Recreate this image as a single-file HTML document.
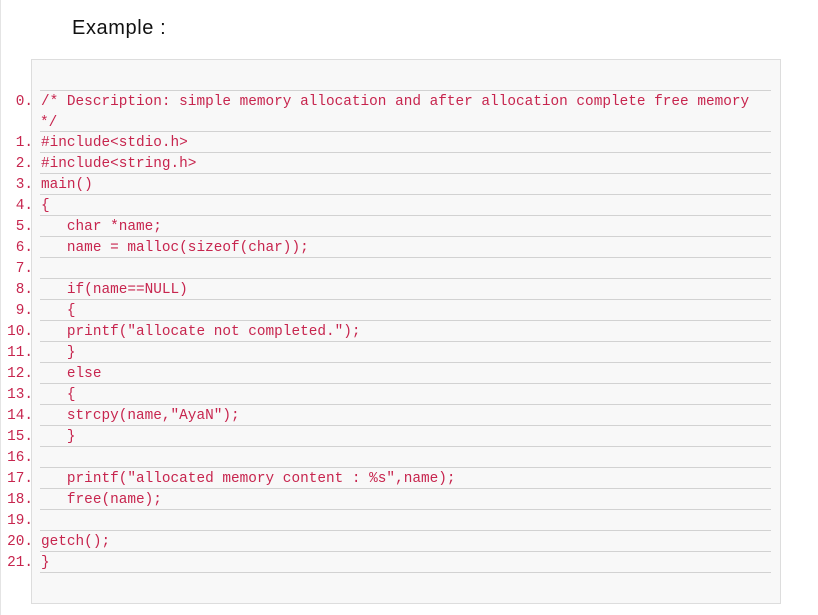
<!DOCTYPE html>
<html><head><style>
body{margin:0;width:818px;height:615px;background:#fff;position:relative;overflow:hidden;font-family:"Liberation Sans",sans-serif}
.vl{position:absolute;left:0;top:0;width:1px;height:615px;background:#e4e4e4}
h3{position:absolute;left:72px;top:17px;margin:0;font-weight:normal;font-size:20px;letter-spacing:0.6px;color:#111}
.box{position:absolute;left:31px;top:59px;width:748px;height:543px;background:#f8f8f8;border:1px solid #ddd}
.r{position:absolute;left:40px;width:731px;border-top:1px solid #d2d2d2;font-family:"Liberation Mono",monospace;font-size:14.4px;line-height:21px;color:#c7254e;white-space:pre}
.r span{position:absolute;right:738px;top:1px;color:#c7254e}
.r b{font-weight:normal;padding-left:1px;position:relative;top:1px}
</style></head><body>
<div class="vl"></div>
<h3>Example :</h3>
<div class="box"></div>
<div class="r" style="top:90px;height:40px"><span>0.</span><b>/* Description: simple memory allocation and after allocation complete free memory
*/</b></div>
<div class="r" style="top:131px"><span>1.</span><b>#include&lt;stdio.h&gt;</b></div>
<div class="r" style="top:152px"><span>2.</span><b>#include&lt;string.h&gt;</b></div>
<div class="r" style="top:173px"><span>3.</span><b>main()</b></div>
<div class="r" style="top:194px"><span>4.</span><b>{</b></div>
<div class="r" style="top:215px"><span>5.</span><b>   char *name;</b></div>
<div class="r" style="top:236px"><span>6.</span><b>   name = malloc(sizeof(char));</b></div>
<div class="r" style="top:257px"><span>7.</span><b> </b></div>
<div class="r" style="top:278px"><span>8.</span><b>   if(name==NULL)</b></div>
<div class="r" style="top:299px"><span>9.</span><b>   {</b></div>
<div class="r" style="top:320px"><span>10.</span><b>   printf("allocate not completed.");</b></div>
<div class="r" style="top:341px"><span>11.</span><b>   }</b></div>
<div class="r" style="top:362px"><span>12.</span><b>   else</b></div>
<div class="r" style="top:383px"><span>13.</span><b>   {</b></div>
<div class="r" style="top:404px"><span>14.</span><b>   strcpy(name,"AyaN");</b></div>
<div class="r" style="top:425px"><span>15.</span><b>   }</b></div>
<div class="r" style="top:446px"><span>16.</span><b> </b></div>
<div class="r" style="top:467px"><span>17.</span><b>   printf("allocated memory content : %s",name);</b></div>
<div class="r" style="top:488px"><span>18.</span><b>   free(name);</b></div>
<div class="r" style="top:509px"><span>19.</span><b> </b></div>
<div class="r" style="top:530px"><span>20.</span><b>getch();</b></div>
<div class="r" style="top:551px"><span>21.</span><b>}</b></div>
<div class="r" style="top:572px;height:0"></div>
</body></html>
